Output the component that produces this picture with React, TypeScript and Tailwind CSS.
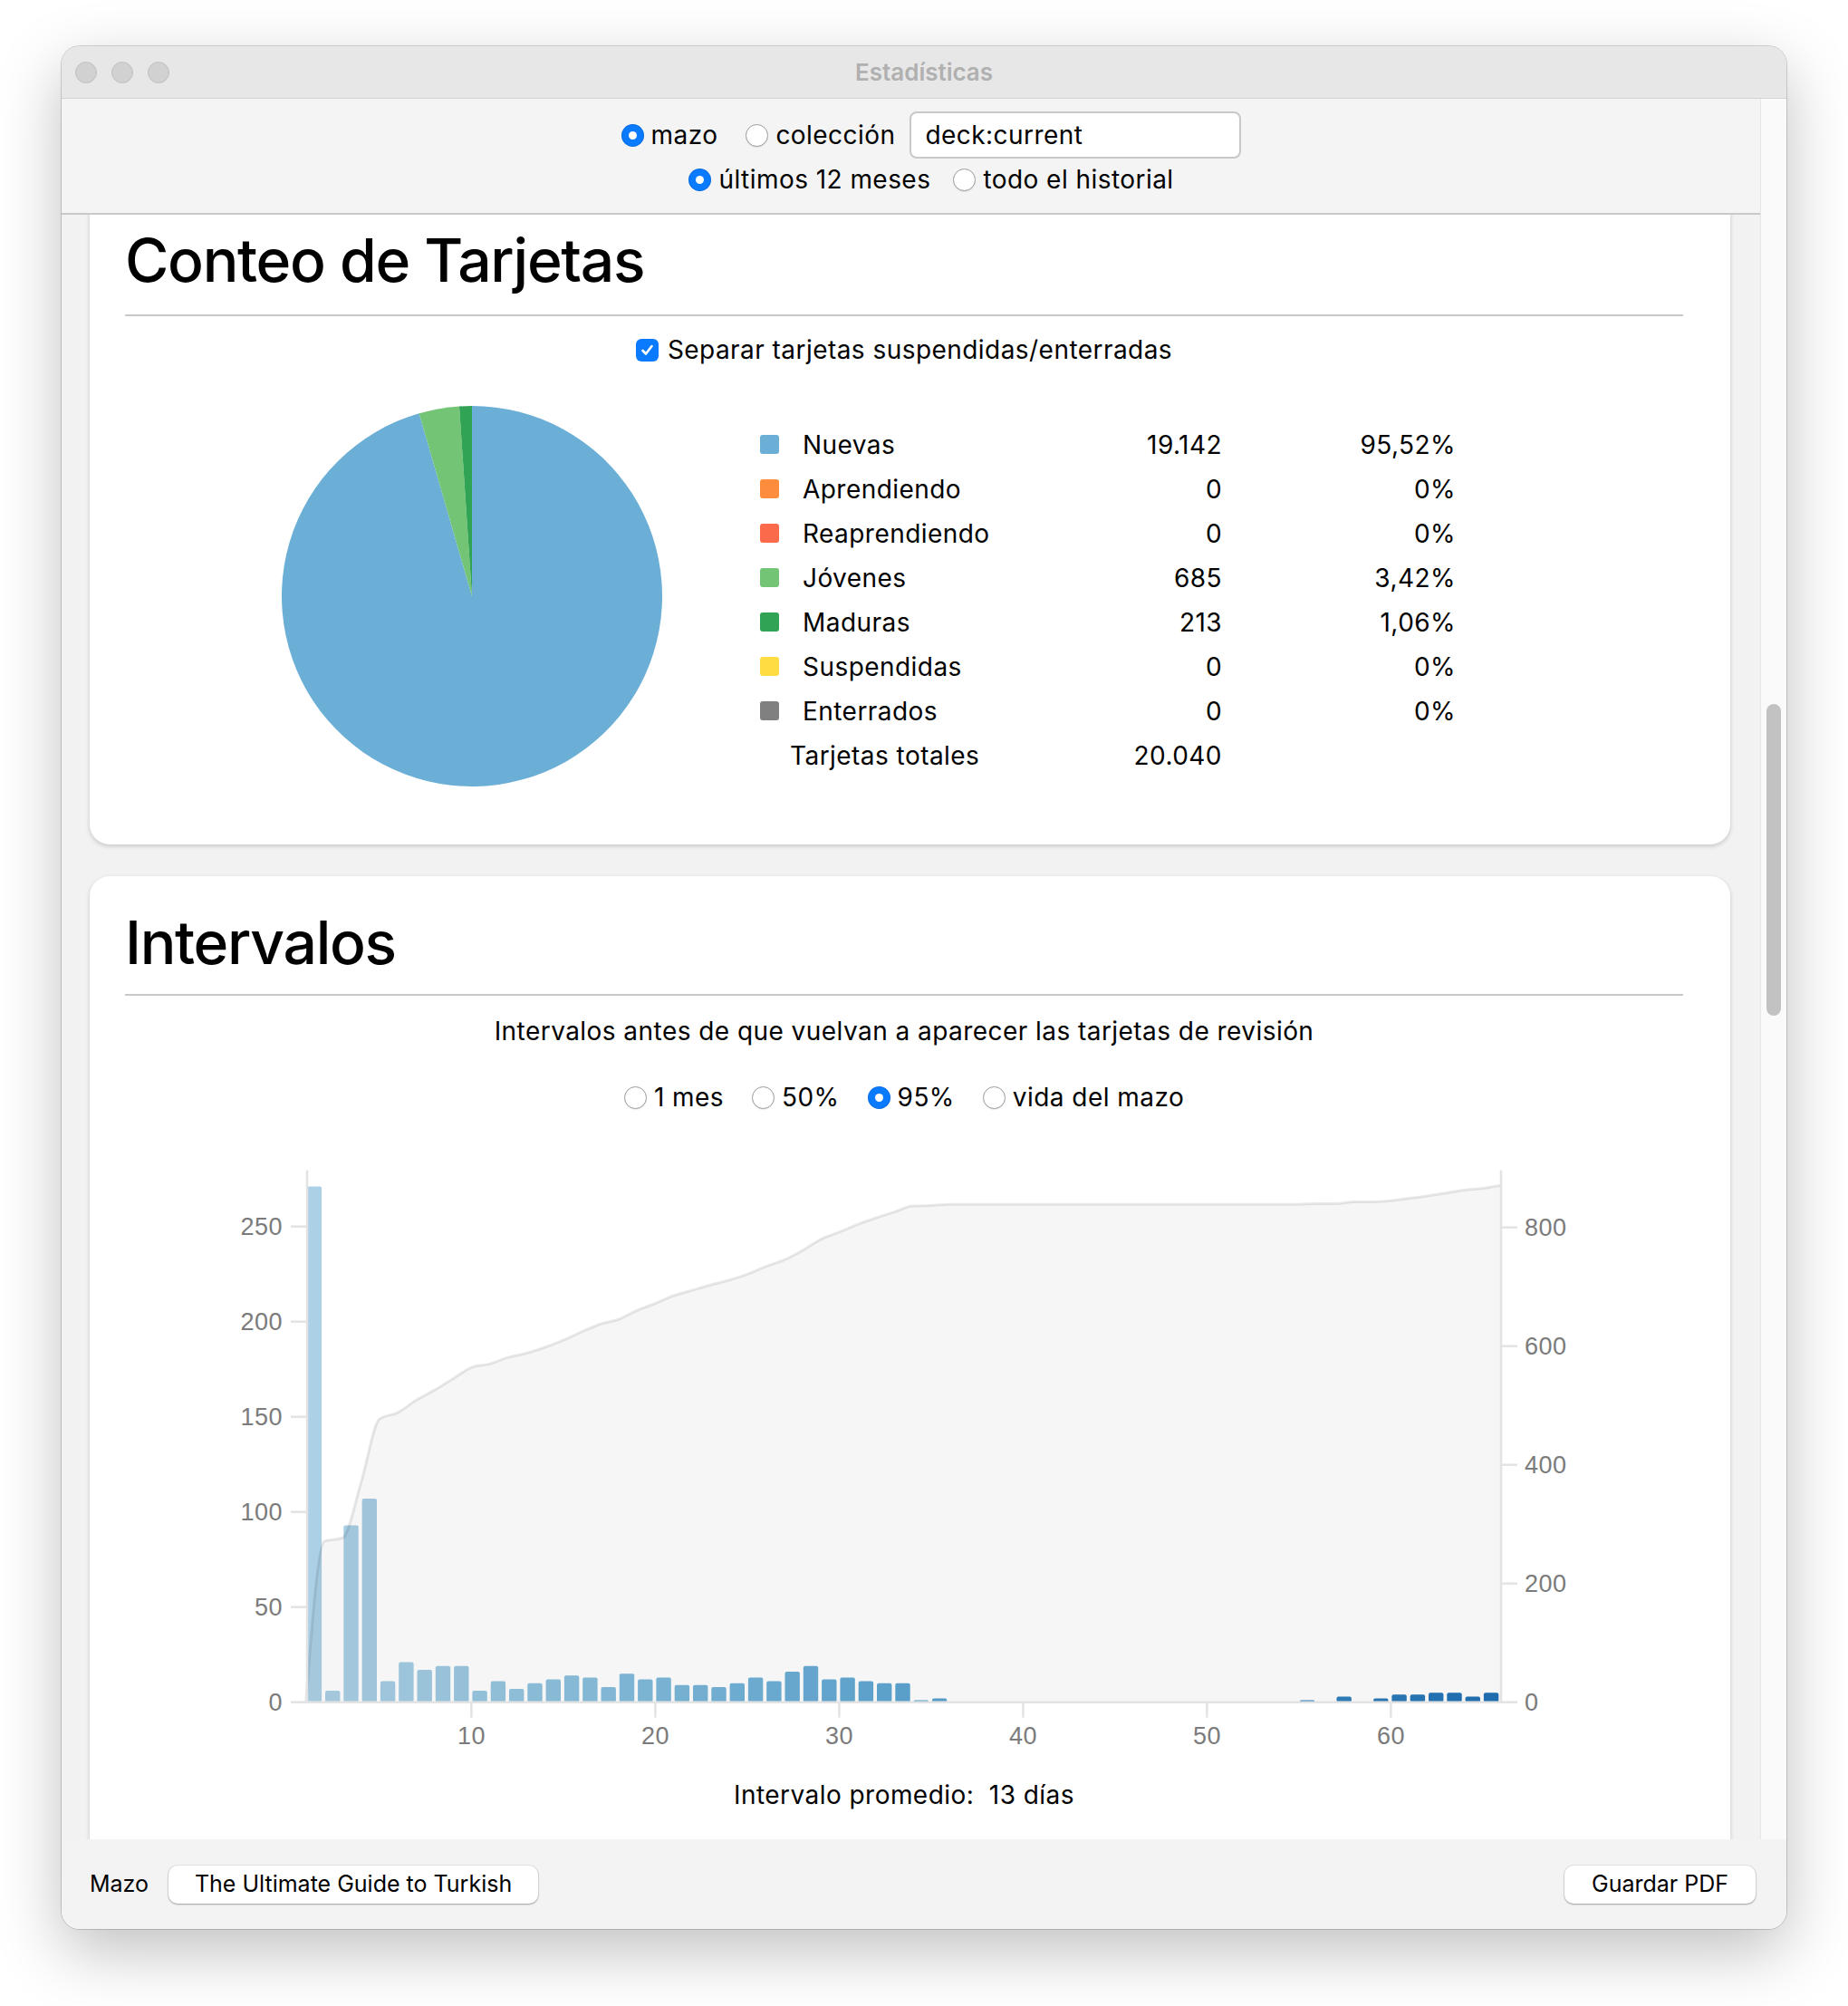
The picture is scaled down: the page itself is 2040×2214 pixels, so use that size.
import React from "react";

// pie + legend data
const legend = [
  { label: "Nuevas", swatch: "bg-[#6baed6]", count: "19.142", pct: "95,52%" },
  { label: "Aprendiendo", swatch: "bg-[#fd8d3c]", count: "0", pct: "0%" },
  { label: "Reaprendiendo", swatch: "bg-[#fb6a4a]", count: "0", pct: "0%" },
  { label: "Jóvenes", swatch: "bg-[#74c476]", count: "685", pct: "3,42%" },
  { label: "Maduras", swatch: "bg-[#31a354]", count: "213", pct: "1,06%" },
  { label: "Suspendidas", swatch: "bg-[#ffdc41]", count: "0", pct: "0%" },
  { label: "Enterrados", swatch: "bg-[#808080]", count: "0", pct: "0%" },
];

const slices = [
  { value: 19142, color: "#6baed6" },
  { value: 685, color: "#74c476" },
  { value: 213, color: "#31a354" },
];

// interval histogram (days -> cards)
const bins: Record<number, number> = {
  1: 271, 2: 6, 3: 93, 4: 107, 5: 11, 6: 21, 7: 17, 8: 19, 9: 19, 10: 6,
  11: 11, 12: 7, 13: 10, 14: 12, 15: 14, 16: 13, 17: 8, 18: 15, 19: 12, 20: 13,
  21: 9, 22: 9, 23: 8, 24: 10, 25: 13, 26: 11, 27: 16, 28: 19, 29: 12, 30: 13,
  31: 11, 32: 10, 33: 10, 34: 1, 35: 2, 55: 1, 57: 3, 59: 2, 60: 4, 61: 4,
  62: 5, 63: 5, 64: 3, 65: 5,
};

const blues = ["#f7fbff", "#deebf7", "#c6dbef", "#9ecae1", "#6baed6", "#4292c6", "#2171b5", "#08519c", "#08306b"];

function hex(c: string) {
  return [1, 3, 5].map((i) => parseInt(c.slice(i, i + 2), 16));
}

function blue(t: number) {
  const s = t * (blues.length - 1);
  const i = Math.min(Math.floor(s), blues.length - 2);
  const f = s - i;
  const a = hex(blues[i]);
  const b = hex(blues[i + 1]);
  const m = a.map((v, k) => Math.round(v + (b[k] - v) * f));
  return `rgb(${m[0]},${m[1]},${m[2]})`;
}

function sign(v: number) {
  return v < 0 ? -1 : 1;
}

// d3-style monotoneX curve
function monotone(pts: [number, number][]) {
  const n = pts.length;
  const t: number[] = new Array(n).fill(0);
  for (let i = 1; i < n - 1; i++) {
    const [x0, y0] = pts[i - 1];
    const [x1, y1] = pts[i];
    const [x2, y2] = pts[i + 1];
    const h0 = x1 - x0;
    const h1 = x2 - x1;
    const s0 = (y1 - y0) / h0;
    const s1 = (y2 - y1) / h1;
    const p = (s0 * h1 + s1 * h0) / (h0 + h1);
    t[i] = (sign(s0) + sign(s1)) * Math.min(Math.abs(s0), Math.abs(s1), 0.5 * Math.abs(p)) || 0;
  }
  const h = pts[1][0] - pts[0][0];
  t[0] = ((3 * (pts[1][1] - pts[0][1])) / h - t[1]) / 2;
  const hl = pts[n - 1][0] - pts[n - 2][0];
  t[n - 1] = ((3 * (pts[n - 1][1] - pts[n - 2][1])) / hl - t[n - 2]) / 2;
  let d = `M${pts[0][0]},${pts[0][1]}`;
  for (let i = 0; i < n - 1; i++) {
    const [x0, y0] = pts[i];
    const [x1, y1] = pts[i + 1];
    const dx = (x1 - x0) / 3;
    d += ` C${x0 + dx},${y0 + dx * t[i]} ${x1 - dx},${y1 - dx * t[i + 1]} ${x1},${y1}`;
  }
  return d;
}

function Radio({ on }: { on?: boolean }) {
  if (on)
    return (
      <span className="flex h-[25px] w-[25px] shrink-0 items-center justify-center rounded-full bg-[#0a7aff] shadow-[inset_0_0_0_1px_rgba(0,0,0,0.12)]">
        <span className="h-[9px] w-[9px] rounded-full bg-white" />
      </span>
    );
  return (
    <span className="h-[25px] w-[25px] shrink-0 rounded-full border border-[#9b9b9b] bg-white shadow-[0_1px_1px_rgba(0,0,0,0.08)]" />
  );
}

function Option({ on, label }: { on?: boolean; label: string }) {
  return (
    <div className="flex items-center gap-[8px]">
      <Radio on={on} />
      <span>{label}</span>
    </div>
  );
}

function PieChart() {
  const cx = 210;
  const cy = 210;
  const r = 210;
  const total = slices.reduce((a, s) => a + s.value, 0);
  let acc = 0;
  const pt = (a: number) => [cx + r * Math.sin(a), cy - r * Math.cos(a)];
  return (
    <svg width="420" height="420" viewBox="0 0 420 420" className="shrink-0">
      {slices.map((s, i) => {
        const a0 = (acc / total) * Math.PI * 2;
        acc += s.value;
        const a1 = (acc / total) * Math.PI * 2;
        const [x0, y0] = pt(a0);
        const [x1, y1] = pt(a1);
        const large = a1 - a0 > Math.PI ? 1 : 0;
        return (
          <path
            key={i}
            d={`M${cx},${cy} L${x0},${y0} A${r},${r} 0 ${large} 1 ${x1},${y1} Z`}
            fill={s.color}
          />
        );
      })}
    </svg>
  );
}

function IntervalChart() {
  // svg sits at page x=138, y=1260
  const xs = (v: number) => 199.7 + (v - 1) * 20.3;
  const yb = 618.7;
  const yl = (v: number) => yb - v * 2.1;
  const yr = (v: number) => yb - v * 0.655;

  const pts: [number, number][] = [[xs(1), yb]];
  let cum = 0;
  for (let i = 1; i <= 65; i++) {
    cum += bins[i] || 0;
    pts.push([xs(i + 1), yr(cum)]);
  }
  const line = monotone(pts);
  const area = `${line} L${xs(66)},${yb} L${xs(1)},${yb} Z`;

  return (
    <svg width="1720" height="690" viewBox="0 0 1720 690" className="block">
      {Object.entries(bins).map(([k, v]) => {
        const i = Number(k);
        return (
          <rect
            key={k}
            x={xs(i) + 1}
            y={yl(v)}
            width={16.4}
            height={v * 2.1}
            rx={2}
            fill={blue(0.33 + ((i - 1) / 64) * 0.42)}
          />
        );
      })}
      <path d={area} fill="#000" fillOpacity={0.035} />
      <path d={line} fill="none" stroke="#000" strokeOpacity={0.09} strokeWidth={3} />

      {/* left axis */}
      <line x1={201} y1={31.5} x2={201} y2={yb} stroke="#e3e3e3" strokeWidth={2.5} />
      {[0, 50, 100, 150, 200, 250].map((v) => (
        <g key={v}>
          <line x1={183} y1={yl(v)} x2={201} y2={yl(v)} stroke="#e3e3e3" strokeWidth={2.5} />
          <text x={174} y={yl(v)} textAnchor="end" dominantBaseline="central" fill="#7b7b7b" fontSize={27} fontFamily="Liberation Sans, Arial, sans-serif">
            {v}
          </text>
        </g>
      ))}

      {/* right axis */}
      <line x1={1519} y1={31.5} x2={1519} y2={yb} stroke="#e3e3e3" strokeWidth={2.5} />
      {[0, 200, 400, 600, 800].map((v) => (
        <g key={v}>
          <line x1={1519} y1={yr(v)} x2={1537} y2={yr(v)} stroke="#e3e3e3" strokeWidth={2.5} />
          <text x={1545} y={yr(v)} dominantBaseline="central" fill="#7b7b7b" fontSize={27} fontFamily="Liberation Sans, Arial, sans-serif">
            {v}
          </text>
        </g>
      ))}

      {/* x axis */}
      <line x1={201} y1={yb} x2={1519} y2={yb} stroke="#e3e3e3" strokeWidth={2.5} />
      {[10, 20, 30, 40, 50, 60].map((v) => (
        <g key={v}>
          <line x1={xs(v)} y1={yb} x2={xs(v)} y2={yb + 17} stroke="#e3e3e3" strokeWidth={2.5} />
          <text x={xs(v)} y={656} textAnchor="middle" dominantBaseline="central" fill="#7b7b7b" fontSize={27} fontFamily="Liberation Sans, Arial, sans-serif">
            {v}
          </text>
        </g>
      ))}
    </svg>
  );
}

function Heading({ children }: { children: React.ReactNode }) {
  return (
    <h1 className="h-[80px] text-[66px] leading-[80px] font-medium tracking-[-1.3px] text-black">{children}</h1>
  );
}

export default function App() {
  return (
    <div className="relative h-[2214px] w-[2040px] overflow-hidden bg-white font-['Inter','Noto_Sans',sans-serif] text-[28px] tracking-[0.45px] text-black">
      <div className="ml-[68px] mt-[51px] flex h-[2078px] w-[1904px] flex-col overflow-hidden rounded-[20px] bg-[#f3f3f3] shadow-[0_0_0_1px_rgba(0,0,0,0.16),0_24px_70px_rgba(0,0,0,0.25)]">
        {/* title bar */}
        <div className="grid h-[58px] shrink-0 grid-cols-[1fr_auto_1fr] items-center border-b border-[#d2d2d2] bg-[#e7e7e7]">
          <div className="flex gap-[16px] pl-[15px]">
            <span className="h-[24px] w-[24px] rounded-full border border-[#c0c0c0] bg-[#d1d1d1]" />
            <span className="h-[24px] w-[24px] rounded-full border border-[#c0c0c0] bg-[#d1d1d1]" />
            <span className="h-[24px] w-[24px] rounded-full border border-[#c0c0c0] bg-[#d1d1d1]" />
          </div>
          <div className="text-[26px] font-semibold tracking-normal text-[#b0b0b0]">Estadísticas</div>
          <div />
        </div>

        {/* body */}
        <div className="flex h-[1921px] shrink-0">
          <div className="flex min-w-0 flex-1 flex-col">
            {/* toolbar */}
            <div className="flex h-[128px] shrink-0 flex-col items-center border-b-2 border-[#c9c9c9] bg-[#f4f4f4] pl-[45px] pt-[14px]">
              <div className="flex h-[52px] items-center">
                <Option on label="mazo" />
                <div className="ml-[31px]">
                  <Option label="colección" />
                </div>
                <div className="ml-[16px] flex h-[52px] w-[366px] items-center rounded-[8px] border-2 border-[#c8c8c8] bg-white pl-[15px]">
                  deck:current
                </div>
              </div>
              <div className="mt-[7px] flex h-[32px] items-center gap-[25px]">
                <Option on label="últimos 12 meses" />
                <Option label="todo el historial" />
              </div>
            </div>

            {/* scrolled content */}
            <div className="h-[1793px] overflow-hidden bg-[#f2f2f2] pl-[31px] pr-[33px]">
              {/* card 1 */}
              <div className="-mt-[23px] h-[718px] rounded-[22px] bg-white pl-[39px] pr-[52px] pt-[33px] shadow-[0_2px_5px_rgba(0,0,0,0.18)]">
                <Heading>Conteo de Tarjetas</Heading>
                <div className="mt-[20px] h-[2px] bg-[#c8c8c8]" />
                <div className="mt-[20px] flex h-[34px] items-center justify-center gap-[10px]">
                  <span className="flex h-[25px] w-[25px] items-center justify-center rounded-[6px] bg-[#0a7aff]">
                    <svg width="17" height="17" viewBox="0 0 17 17">
                      <path d="M3.5 9 L7 12.5 L13.5 4" fill="none" stroke="#fff" strokeWidth="2.6" strokeLinecap="round" strokeLinejoin="round" />
                    </svg>
                  </span>
                  <span>Separar tarjetas suspendidas/enterradas</span>
                </div>
                <div className="mt-[45px] flex">
                  <div className="ml-[173px]">
                    <PieChart />
                  </div>
                  <div className="ml-[108px] mt-[18px] flex flex-col">
                    {legend.map((row) => (
                      <div key={row.label} className="flex h-[49px] items-center">
                        <span className={`h-[21px] w-[21px] rounded-[3px] ${row.swatch}`} />
                        <span className="ml-[26px] w-[263px]">{row.label}</span>
                        <span className="w-[200px] text-right">{row.count}</span>
                        <span className="w-[258px] text-right">{row.pct}</span>
                      </div>
                    ))}
                    <div className="flex h-[49px] items-center">
                      <span className="ml-[33px] w-[277px]">Tarjetas totales</span>
                      <span className="w-[200px] text-right">20.040</span>
                    </div>
                  </div>
                </div>
              </div>

              {/* card 2 */}
              <div className="mt-[35px] h-[1200px] rounded-[22px] bg-white pl-[39px] pr-[52px] pt-[33px] shadow-[0_2px_5px_rgba(0,0,0,0.18)]">
                <Heading>Intervalos</Heading>
                <div className="mt-[17px] h-[2px] bg-[#c8c8c8]" />
                <div className="mt-[22px] flex h-[34px] items-center justify-center">
                  Intervalos antes de que vuelvan a aparecer las tarjetas de revisión
                </div>
                <div className="mt-[39px] flex h-[34px] items-center justify-center gap-[31px]">
                  <Option label="1 mes" />
                  <Option label="50%" />
                  <Option on label="95%" />
                  <Option label="vida del mazo" />
                </div>
                <div className="mt-[32px]">
                  <IntervalChart />
                </div>
                <div className="mt-[14px] flex h-[34px] items-center justify-center">Intervalo promedio:&nbsp; 13 días</div>
              </div>
            </div>
          </div>

          {/* scrollbar */}
          <div className="w-[29px] shrink-0 border-l border-[#e6e6e6] bg-[#fafafa] pl-[6px] pt-[668px]">
            <div className="h-[344px] w-[16px] rounded-full bg-[#c2c2c2]" />
          </div>
        </div>

        {/* bottom bar */}
        <div className="flex h-[99px] shrink-0 items-center bg-[#f3f3f3] pl-[31px] pr-[34px] text-[25px] tracking-normal">
          <span>Mazo</span>
          <div className="ml-[22px] flex h-[42px] w-[408px] items-center justify-center rounded-[10px] bg-white shadow-[0_0_0_1px_rgba(0,0,0,0.06),0_1px_2px_rgba(0,0,0,0.3)]">
            The Ultimate Guide to Turkish
          </div>
          <div className="ml-auto flex h-[42px] w-[211px] items-center justify-center rounded-[10px] bg-white shadow-[0_0_0_1px_rgba(0,0,0,0.06),0_1px_2px_rgba(0,0,0,0.3)]">
            Guardar PDF
          </div>
        </div>
      </div>
    </div>
  );
}
